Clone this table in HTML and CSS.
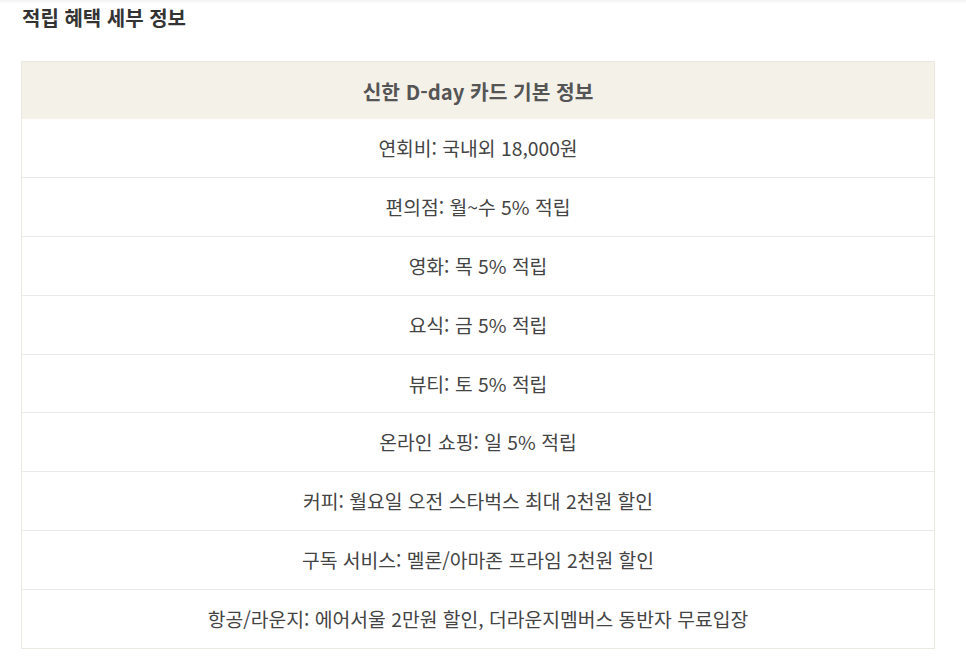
FILE: index.html
```html
<!DOCTYPE html>
<html lang="ko">
<head>
<meta charset="utf-8">
<link rel="stylesheet" href="styles.css">
</head>
<body>
<div class="page">
  <h2 class="title">적립 혜택 세부 정보</h2>
  <div class="info">
    <div class="head">신한 D-day 카드 기본 정보</div>
    <div class="row">연회비: 국내외 18,000원</div>
    <div class="row">편의점: 월~수 5% 적립</div>
    <div class="row">영화: 목 5% 적립</div>
    <div class="row">요식: 금 5% 적립</div>
    <div class="row">뷰티: 토 5% 적립</div>
    <div class="row">온라인 쇼핑: 일 5% 적립</div>
    <div class="row">커피: 월요일 오전 스타벅스 최대 2천원 할인</div>
    <div class="row">구독 서비스: 멜론/아마존 프라임 2천원 할인</div>
    <div class="row">항공/라운지: 에어서울 2만원 할인, 더라운지멤버스 동반자 무료입장</div>
  </div>
</div>
</body>
</html>
```
FILE: styles.css
```css
html, body {
  margin: 0;
  padding: 0;
  background: #ffffff;
}
body {
  font-family: "Noto Sans CJK KR", "Noto Sans", sans-serif;
  color: #333;
}
.page {
  padding: 3px 31px 0 21px;
  background: linear-gradient(#f3f3f3 0, #ffffff 4px) no-repeat;
}
.title {
  margin: 0 0 0 1px;
  font-size: 20px;
  line-height: 30px;
  font-weight: 700;
  color: #333;
}
.info {
  margin-top: 28px;
  width: 914px;
  box-sizing: border-box;
  border: 1px solid #ebe8e1;
  display: flex;
  flex-direction: column;
}
.head,
.row {
  display: flex;
  align-items: center;
  justify-content: center;
  box-sizing: border-box;
}
.head {
  height: 57px;
  background: #f4f1e9;
  font-size: 20.3px;
  font-weight: 700;
  color: #555;
}
.row {
  height: 58.8px;
  border-top: 1px solid #ebeae7;
  font-size: 19.3px;
  font-weight: 400;
  color: #444;
}
.head + .row {
  height: 58.3px;
  border-top: 0;
}
```
